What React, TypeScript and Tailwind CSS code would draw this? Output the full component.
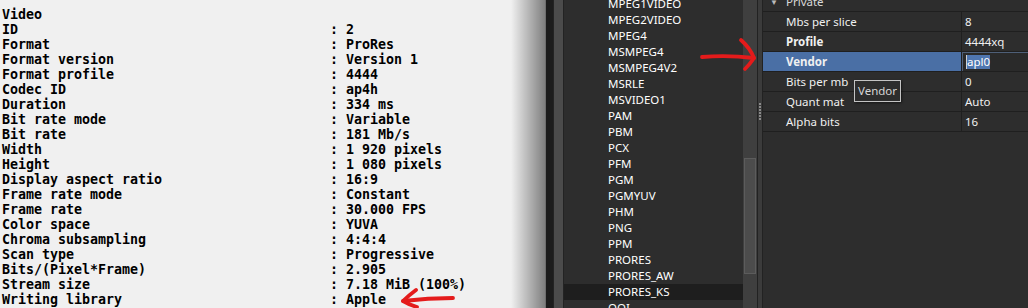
import React from "react";

const info: [string, string | null][] = [
  ["Video", null],
  ["ID", "2"],
  ["Format", "ProRes"],
  ["Format version", "Version 1"],
  ["Format profile", "4444"],
  ["Codec ID", "ap4h"],
  ["Duration", "334 ms"],
  ["Bit rate mode", "Variable"],
  ["Bit rate", "181 Mb/s"],
  ["Width", "1 920 pixels"],
  ["Height", "1 080 pixels"],
  ["Display aspect ratio", "16:9"],
  ["Frame rate mode", "Constant"],
  ["Frame rate", "30.000 FPS"],
  ["Color space", "YUVA"],
  ["Chroma subsampling", "4:4:4"],
  ["Scan type", "Progressive"],
  ["Bits/(Pixel*Frame)", "2.905"],
  ["Stream size", "7.18 MiB (100%)"],
  ["Writing library", "Apple"],
];

const codecs = [
  "MPEG1VIDEO", "MPEG2VIDEO", "MPEG4", "MSMPEG4", "MSMPEG4V2", "MSRLE", "MSVIDEO1",
  "PAM", "PBM", "PCX", "PFM", "PGM", "PGMYUV", "PHM", "PNG", "PPM", "PRORES",
  "PRORES_AW", "PRORES_KS", "QOI",
];

const props = [
  { name: "Mbs per slice", value: "8" },
  { name: "Profile", value: "4444xq", bold: true },
  { name: "Vendor", value: "apl0", bold: true, selected: true },
  { name: "Bits per mb", value: "0" },
  { name: "Quant mat", value: "Auto" },
  { name: "Alpha bits", value: "16" },
];

function MediaInfo() {
  return (
    <div className="relative w-[545px] shrink-0 bg-[#f0f0f0] overflow-hidden">
      <div
        className="pt-[7px] pl-[2px] text-black font-bold text-[13.3px] leading-[15px]"
        style={{ fontFamily: '"DejaVu Sans Mono", monospace' }}
      >
        {info.map(([label, value]) => (
          <div key={label} className="whitespace-pre h-[15px]">
            <span className="inline-block w-[328px]">{label}</span>
            {value !== null && <span>{": " + value}</span>}
          </div>
        ))}
      </div>
      <div className="absolute top-0 right-0 h-full w-[34px] bg-linear-to-r from-transparent to-[#00000078]" />
    </div>
  );
}

function CodecList() {
  return (
    <div className="w-[179px] shrink-0 bg-[#2d2d2d] overflow-hidden">
      <div className="-mt-[4px]">
        {codecs.map((c) => (
          <div
            key={c}
            className={`h-[16px] leading-[16px] pl-[44px] text-[11.5px] text-white ${
              c === "PRORES_KS" ? "bg-[#1e1e1e]" : ""
            }`}
          >
            {c}
          </div>
        ))}
      </div>
    </div>
  );
}

function ScrollBar() {
  return (
    <div className="relative w-[14px] shrink-0 bg-[#3f3f3f]">
      <div className="absolute left-[1px] right-[1px] top-[158px] h-[116px] bg-[#4c4c4c] border border-[#5c5c5c]" />
    </div>
  );
}

function Splitter() {
  return (
    <div className="w-[6px] shrink-0 bg-[#3b3b3b] border-x border-[#222] flex flex-col items-center justify-center">
      <div className="flex flex-col gap-[1px] -mt-[86px]">
        {Array.from({ length: 6 }).map((_, i) => (
          <div key={i} className="w-[2px] h-[2px] bg-[#8a8a8a]" />
        ))}
      </div>
    </div>
  );
}

function PropertyGrid() {
  return (
    <div className="relative flex-1 bg-[#2d2d2d] overflow-hidden text-[11.5px] text-[#f0f0f0]">
      <div className="-mt-[8px]">
        <div className="h-[20px] flex items-center border-b border-[#1f1f1f]">
          <span className="w-[23px] pl-[7px] text-[8px] text-[#bbb]">▼</span>
          <span className="text-[#d8d8d8]">Private</span>
        </div>
        {props.map((p) => (
          <div key={p.name} className="h-[20px] flex border-b border-[#1f1f1f]">
            <div
              className={`w-[199px] shrink-0 pl-[23px] flex items-center border-r border-[#1f1f1f] ${
                p.bold ? "font-bold" : ""
              } ${p.selected ? "bg-[#4a6fa5]" : ""}`}
            >
              {p.name}
            </div>
            <div
              className={`flex-1 flex items-center pl-[3px] ${
                p.selected ? "bg-[#2a2a2a] border-t border-l border-[#4e5f78]" : ""
              }`}
            >
              {p.selected ? (
                <span className="bg-[#4f76b0] text-white leading-[14px] border-l border-[#d0d0d0]">{p.value}</span>
              ) : (
                p.value
              )}
            </div>
          </div>
        ))}
      </div>
      <div className="absolute left-[91px] top-[80px] h-[22px] px-[3px] flex items-center bg-[#2d2d2d] border border-[#c4c4c4] text-[#d6d6d6] shadow-[1px_1px_2px_rgba(0,0,0,0.5)]">
        Vendor
      </div>
    </div>
  );
}

export default function App() {
  return (
    <div
      className="relative w-[1028px] h-[308px] flex overflow-hidden"
      style={{ fontFamily: '"Noto Sans", "Open Sans", sans-serif' }}
    >
      <MediaInfo />
      <div className="w-[1px] shrink-0 bg-[#6e6e6e]" />
      <div className="w-[7px] shrink-0 bg-[#1c1c1c]" />
      <div className="w-[11px] shrink-0 bg-[#4b4b4b] border-x border-[#232323]" />
      <CodecList />
      <ScrollBar />
      <Splitter />
      <PropertyGrid />
      <svg
        className="absolute inset-0 pointer-events-none"
        width={1028}
        height={308}
        fill="none"
        stroke="#e41b1b"
        strokeWidth={3.8}
        strokeLinecap="round"
        strokeLinejoin="round"
      >
        <path d="M453 298 Q428 298 403 301" />
        <path d="M416 290 Q408 296 403 301 Q410 305 417 307" />
        <path d="M702 57 Q728 55 754 58" />
        <path d="M741 40 Q750 48 754 58 Q750 64 745 69" />
      </svg>
    </div>
  );
}
